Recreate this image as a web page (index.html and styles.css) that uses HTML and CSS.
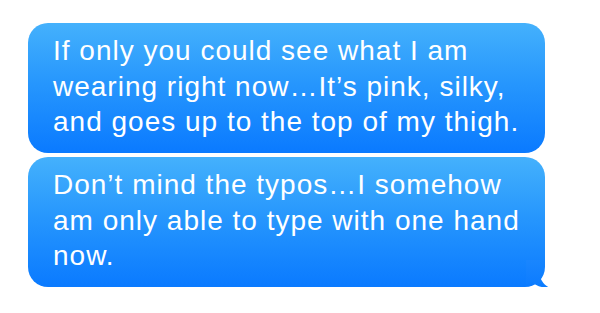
FILE: index.html
```html
<!DOCTYPE html>
<html>
<head>
<meta charset="utf-8">
<link rel="stylesheet" href="styles.css">
</head>
<body>
<div class="thread">
  <div class="bubble">If only you could see what I am<br>wearing right now…It’s pink, silky,<br>and goes up to the top of my thigh.</div>
  <div class="bubble last">Don’t mind the typos…I somehow<br>am only able to type with one hand<br>now.
    <svg class="tail" width="26" height="28" viewBox="0 0 26 28">
      <defs>
        <linearGradient id="tg" x1="0" y1="0" x2="0" y2="1">
          <stop offset="0" stop-color="#1a86fe"/>
          <stop offset="1" stop-color="#0b7bff"/>
        </linearGradient>
      </defs>
      <path d="M0 0 H14 V14 C14 20 18 25 24 28 C17 28 10 26 6 22 C3 24 0 24 0 24 Z" fill="url(#tg)"/>
    </svg>
  </div>
</div>
</body>
</html>
```
FILE: styles.css
```css
html, body {
  margin: 0;
  padding: 0;
  background: #ffffff;
}
.thread {
  display: flex;
  flex-direction: column;
  gap: 4px;
  padding: 23px 0 0 28px;
}
.bubble {
  position: relative;
  box-sizing: border-box;
  width: 517px;
  height: 130px;
  padding: 10px 10px 0 25px;
  border-radius: 20px;
  background: linear-gradient(to bottom, #44b1fc 0%, #2797fd 45%, #0a7aff 100%);
  color: #ffffff;
  font-family: "Liberation Sans", Arial, sans-serif;
  font-size: 28px;
  letter-spacing: 1px;
  line-height: 35.5px;
  white-space: nowrap;
}
.tail {
  position: absolute;
  right: -7px;
  bottom: -1px;
}
```
